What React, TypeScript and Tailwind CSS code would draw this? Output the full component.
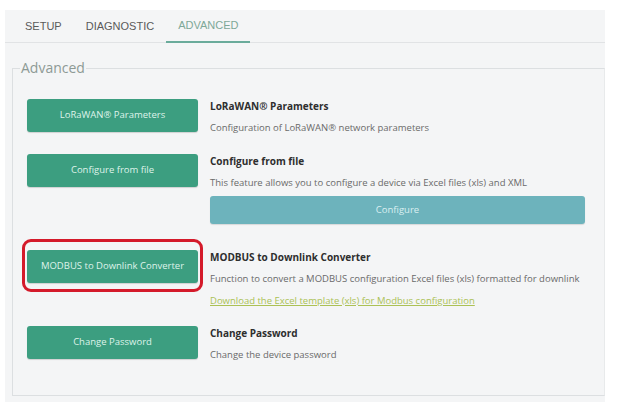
import React from "react";

const btn =
  "w-[171px] h-[33px] shrink-0 rounded-[3px] bg-[#3c9e80] text-[#dff3ea] text-[9.5px] flex items-center justify-center shadow-[0_1px_1px_rgba(0,0,0,0.15)]";

function Row({
  label,
  title,
  children,
  outlined,
}: {
  label: string;
  title: string;
  children: React.ReactNode;
  outlined?: boolean;
}) {
  return (
    <div className="flex items-start gap-[12px]">
      <div className="relative shrink-0">
        <div className={btn}>{label}</div>
        {outlined && (
          <div className="absolute -left-[5px] -right-[5px] -top-[11px] -bottom-[9px] border-[3px] border-[#d41a2a] rounded-[9px]" />
        )}
      </div>
      <div className="flex-1 -mt-[1px]">
        <div className="text-[10px] leading-[16px] font-bold text-[#2e2e2e]">{title}</div>
        {children}
      </div>
    </div>
  );
}

export default function App() {
  return (
    <div
      className="w-[620px] h-[411px] bg-white pt-[10px] pl-[5px]"
      style={{ fontFamily: '"Open Sans", "Liberation Sans", sans-serif' }}
    >
      <div className="w-[600px] bg-[#f4f5f6] pb-[6px]">
        <div
          className="flex h-[33px] border-b border-[#e1e3e5] pl-[8px] text-[11px]"
          style={{ fontFamily: '"Liberation Sans", Arial, sans-serif' }}
        >
          <div className="px-[12px] flex items-center text-[#5a5a5a]">SETUP</div>
          <div className="px-[12px] flex items-center text-[#5a5a5a]">DIAGNOSTIC</div>
          <div className="px-[12px] flex items-center text-[#7ea898] border-b-2 border-[#6aab9b] -mb-[1px]">
            ADVANCED
          </div>
        </div>
        <fieldset className="ml-[7px] mt-[16px] border border-[#dcdfe1] border-r-[#e8eaeb] min-w-0">
          <legend className="ml-[7px] px-[1px] text-[14px] leading-[18px] text-[#8d9a95]">Advanced</legend>
          <div className="pt-[22px] pb-[32px] pl-[14px] pr-[20px] flex flex-col">
            <Row label="LoRaWAN® Parameters" title="LoRaWAN® Parameters">
              <div className="mt-[6px] text-[9.5px] leading-[16px] text-[#6a6a6a]">
                Configuration of LoRaWAN® network parameters
              </div>
            </Row>
            <div className="h-[18px]" />
            <Row label="Configure from file" title="Configure from file">
              <div className="mt-[6px] text-[9.5px] leading-[16px] text-[#6a6a6a]">
                This feature allows you to configure a device via Excel files (xls) and XML
              </div>
              <div className="mt-[5px] w-[375px] h-[28px] rounded-[3px] bg-[#6db3bc] text-[#dbeff1] text-[9.5px] flex items-center justify-center shadow-[0_1px_1px_rgba(0,0,0,0.12)]">
                Configure
              </div>
            </Row>
            <div className="h-[26px]" />
            <Row label="MODBUS to Downlink Converter" title="MODBUS to Downlink Converter" outlined>
              <div className="mt-[6px] text-[9.5px] leading-[16px] text-[#6a6a6a]">
                Function to convert a MODBUS configuration Excel files (xls) formatted for downlink
              </div>
              <div className="mt-[6px] text-[9.5px] leading-[16px] text-[#abc155] underline">
                Download the Excel template (xls) for Modbus configuration
              </div>
            </Row>
            <div className="h-[17px]" />
            <Row label="Change Password" title="Change Password">
              <div className="mt-[6px] text-[9.5px] leading-[16px] text-[#6a6a6a]">Change the device password</div>
            </Row>
          </div>
        </fieldset>
      </div>
    </div>
  );
}
